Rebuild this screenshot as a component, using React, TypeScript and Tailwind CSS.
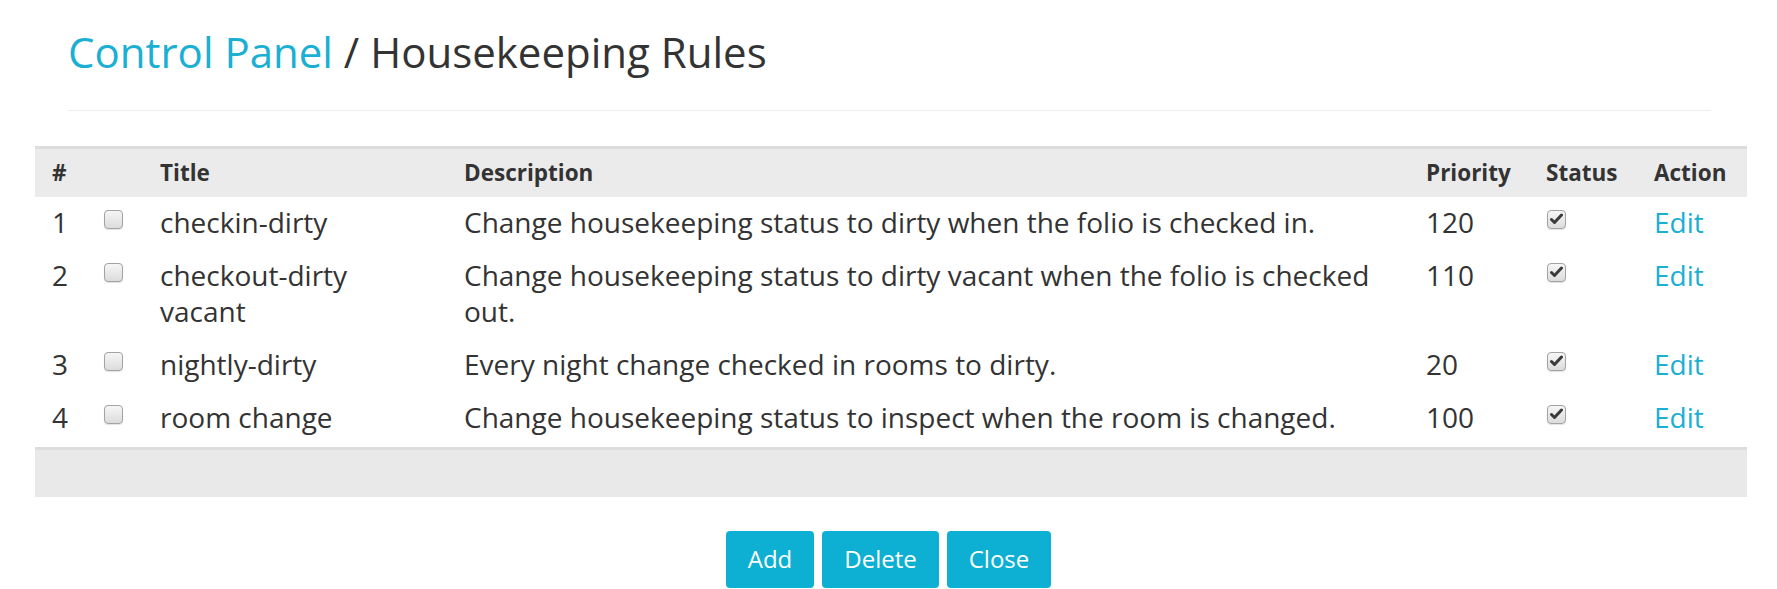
import React from "react";

type Row = { n: number; title: string; desc: string; priority: number };

const rows: Row[] = [
  { n: 1, title: "checkin-dirty", desc: "Change housekeeping status to dirty when the folio is checked in.", priority: 120 },
  { n: 2, title: "checkout-dirty vacant", desc: "Change housekeeping status to dirty vacant when the folio is checked out.", priority: 110 },
  { n: 3, title: "nightly-dirty", desc: "Every night change checked in rooms to dirty.", priority: 20 },
  { n: 4, title: "room change", desc: "Change housekeeping status to inspect when the room is changed.", priority: 100 },
];

function Box({ checked }: { checked?: boolean }) {
  return (
    <div className="mt-[6px] flex h-[19px] w-[19px] items-center justify-center rounded-[4px] border border-[#a3a3a3] bg-gradient-to-b from-[#f6f6f6] to-[#dcdcdc] shadow-[0_1px_1px_rgba(0,0,0,0.12)]">
      {checked && (
        <svg width="13" height="12" viewBox="0 0 13 12">
          <path d="M1.5 6.5 L4.5 9.5 L11.5 2" fill="none" stroke="#3a3a3a" strokeWidth="3" strokeLinecap="round" strokeLinejoin="round" />
        </svg>
      )}
    </div>
  );
}

export default function App() {
  return (
    <div className="min-h-[589px] w-full bg-white text-[#333] [font-family:'Open_Sans',sans-serif]">
      <div className="pl-[68px] pr-[66px] pt-[29px]">
        <h1 className="text-[42px] font-normal leading-[46px]">
          <span className="text-[#1aafd3]">Control Panel</span>
          <span> / Housekeeping Rules</span>
        </h1>
        <div className="mt-[35px] h-px bg-[#eeeeee]" />
      </div>

      <div className="ml-[35px] mr-[30px] mt-[35px]">
        <table className="w-[1712px] table-fixed border-collapse">
          <colgroup>
            <col className="w-[52px]" />
            <col className="w-[56px]" />
            <col className="w-[304px]" />
            <col className="w-[962px]" />
            <col className="w-[120px]" />
            <col className="w-[108px]" />
            <col className="w-[110px]" />
          </colgroup>
          <thead>
            <tr className="h-[49px] border-t-[3px] border-[#dddddd] bg-[#ebebeb] text-left text-[22.5px] font-bold leading-[30px] text-[#333]">
              <th className="pl-[17px]">#</th>
              <th className="pl-[17px]"></th>
              <th className="pl-[17px]">Title</th>
              <th className="pl-[17px]">Description</th>
              <th className="pl-[17px]">Priority</th>
              <th className="pl-[17px]">Status</th>
              <th className="pl-[17px]">Action</th>
            </tr>
          </thead>
          <tbody className="text-[28px] leading-[36px]">
            {rows.map((r) => (
              <tr key={r.n} className="align-top">
                <td className="pb-[10px] pl-[17px] pt-[7px]">{r.n}</td>
                <td className="pb-[10px] pl-[17px] pt-[7px]">
                  <Box />
                </td>
                <td className="pb-[10px] pl-[17px] pt-[7px]">
                  <div className="w-[230px]">{r.title}</div>
                </td>
                <td className="pb-[10px] pl-[17px] pr-[17px] pt-[7px]">{r.desc}</td>
                <td className="pb-[10px] pl-[17px] pt-[7px]">{r.priority}</td>
                <td className="pb-[10px] pl-[18px] pt-[7px]">
                  <Box checked />
                </td>
                <td className="pb-[10px] pl-[17px] pt-[7px]">
                  <a className="text-[#1aafd3]">Edit</a>
                </td>
              </tr>
            ))}
          </tbody>
        </table>
        <div className="mt-[2px] h-[50px] border-t-[3px] border-[#dddddd] bg-[#e9e9e9]" />
      </div>

      <div className="mt-[34px] flex justify-center gap-[8px]">
        <button className="h-[57px] rounded-[4px] bg-[#0db0d3] px-[22px] text-[24px] text-white">Add</button>
        <button className="h-[57px] rounded-[4px] bg-[#0db0d3] px-[22px] text-[24px] text-white">Delete</button>
        <button className="h-[57px] rounded-[4px] bg-[#0db0d3] px-[22px] text-[24px] text-white">Close</button>
      </div>
    </div>
  );
}
